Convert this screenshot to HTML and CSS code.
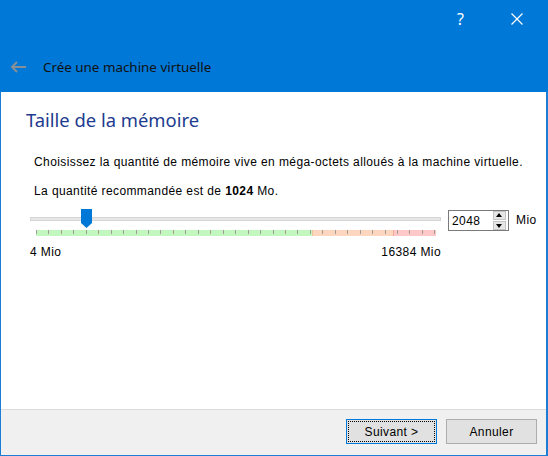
FILE: index.html
```html
<!DOCTYPE html>
<html lang="fr">
<head>
    <meta charset="UTF-8">
    <meta name="viewport" content="width=device-width, initial-scale=1.0">
    <title>Crée une machine virtuelle</title>
    <link rel="stylesheet" href="styles.css">
</head>
<body>
    <div class="window">
        <div class="titlebar">
            <div class="caption-buttons">
                <span class="help">?</span>
                <svg class="close" width="12" height="12" viewBox="0 0 12 12">
                    <path d="M0.5 0.5 L11.5 11.5 M11.5 0.5 L0.5 11.5" stroke="#fff" stroke-width="1.2" fill="none"/>
                </svg>
            </div>
            <div class="wizard-header">
                <svg class="back" width="17" height="12" viewBox="0 0 17 12">
                    <path d="M16 6 H2 M7 1 L2 6 L7 11" stroke="#8a8f96" stroke-width="2" fill="none"/>
                </svg>
                <span class="wizard-title">Crée une machine virtuelle</span>
            </div>
        </div>

        <div class="content">
            <h2 class="page-title">Taille de la mémoire</h2>
            <p class="text">Choisissez la quantité de mémoire vive en méga-octets alloués à la machine virtuelle.</p>
            <p class="text recommended">La quantité recommandée est de <b>1024</b> Mo.</p>

            <div class="memory-row">
                <div class="slider">
                    <div class="groove"></div>
                    <svg class="thumb" width="11" height="19" viewBox="0 0 11 19">
                        <path d="M0 0 H11 V14 L5.5 19 L0 14 Z" fill="#0078d7"/>
                    </svg>
                    <div class="scale">
                        <div class="zone ok"></div>
                        <div class="zone warn"></div>
                        <div class="zone bad"></div>
                    </div>
                    <div class="limits">
                        <span>4 Mio</span>
                        <span>16384 Mio</span>
                    </div>
                </div>
                <div class="spinbox">
                    <span class="value">2048</span>
                    <div class="spin">
                        <div class="spin-btn up"></div>
                        <div class="spin-btn down"></div>
                    </div>
                </div>
                <span class="unit">Mio</span>
            </div>
        </div>

        <div class="footer">
            <button class="btn default"><span>Suivant &gt;</span></button>
            <button class="btn">Annuler</button>
        </div>
    </div>
</body>
</html>
```

FILE: styles.css
```css
body {
    margin: 0;
    font-family: "Liberation Sans", Arial, sans-serif;
    font-size: 12px;
    letter-spacing: 0.4px;
    color: #000;
}

.window {
    width: 548px;
    height: 456px;
    box-sizing: border-box;
    border: 1px solid #1a7fd4;
    border-top: none;
    border-right-width: 2px;
    display: flex;
    flex-direction: column;
    background: #fff;
}

.titlebar {
    height: 92px;
    background: #0078d7;
    margin: 0 -2px 0 -1px;
    padding: 0 2px 0 1px;
}

.caption-buttons {
    height: 38px;
    display: flex;
    align-items: center;
    justify-content: flex-end;
    gap: 47px;
    padding-right: 23px;
}

.help {
    color: #fff;
    font-family: "Noto Sans", sans-serif;
    font-size: 16px;
    letter-spacing: 0;
    margin-top: -1px;
}

.wizard-header {
    display: flex;
    align-items: center;
    height: 54px;
    box-sizing: border-box;
    padding: 4px 0 0 9px;
}

.back {
    margin-right: 16px;
}

.wizard-title {
    font-family: "Noto Sans", sans-serif;
    font-size: 13.4px;
    letter-spacing: 0;
    color: #111;
}

.content {
    flex: 1;
    padding: 0 0 0 25px;
}

.page-title {
    margin: 15px 0 22px;
    font-family: "Noto Sans", sans-serif;
    font-weight: normal;
    font-size: 18.4px;
    letter-spacing: 0;
    line-height: 26px;
    color: #1d3b8f;
}

.text {
    margin: 0 0 14px 8px;
    line-height: 15px;
}

.text.recommended {
    margin-bottom: 11px;
}

.memory-row {
    display: flex;
    align-items: flex-start;
    margin-left: 4px;
}

.slider {
    position: relative;
    width: 411px;
    padding-top: 7px;
}

.groove {
    height: 2px;
    background: #e7e7e7;
    border: 1px solid #d6d6d6;
}

.thumb {
    position: absolute;
    left: 51px;
    top: -1px;
}

.scale {
    display: flex;
    margin: 9px 5px 0 6px;
    height: 6px;
    position: relative;
}

/* graduation marks drawn over the coloured zones */
.scale::after {
    content: "";
    position: absolute;
    inset: 0;
    background: repeating-linear-gradient(to right, #a09a90 0 1px, transparent 1px 12.45px);
    background-size: 100% 4px;
    background-repeat: no-repeat;
}

.zone {
    height: 6px;
}

.ok {
    width: 276px;
    background: #c3f7c0;
}

.warn {
    width: 80px;
    background: #fdd6c0;
    border-left: 1px solid #e8c79a;
}

.bad {
    flex: 1;
    background: #ffc8c8;
    border-left: 1px solid #f1aa9c;
}

.limits {
    display: flex;
    justify-content: space-between;
    margin-top: 9px;
    line-height: 14px;
}

.spinbox {
    margin-left: 7px;
    width: 61px;
    height: 21px;
    box-sizing: border-box;
    border: 1px solid #7a7a7a;
    display: flex;
    align-items: center;
    justify-content: space-between;
    padding: 0 2px 0 3px;
}

.spin {
    display: flex;
    flex-direction: column;
    gap: 1px;
}

.spin-btn {
    width: 11px;
    height: 7px;
    background: #e6e6e6;
    border: 1px solid #c4c4c4;
    position: relative;
}

.spin-btn::after {
    content: "";
    position: absolute;
    left: 2px;
    border-left: 3.5px solid transparent;
    border-right: 3.5px solid transparent;
}

.up::after {
    top: 1px;
    border-bottom: 4px solid #000;
}

.down::after {
    top: 2px;
    border-top: 4px solid #000;
}

.unit {
    margin: 3px 0 0 7px;
}

.footer {
    height: 46px;
    box-sizing: border-box;
    border-top: 1px solid #dcdcdc;
    background: #f0f0f0;
    display: flex;
    justify-content: flex-end;
    align-items: flex-start;
    gap: 9px;
    padding: 9px 9px 0 0;
}

.btn {
    width: 91px;
    height: 25px;
    background: #e1e1e1;
    border: 1px solid #adadad;
    font-family: "Liberation Sans", Arial, sans-serif;
    font-size: 12px;
    letter-spacing: 0.4px;
    color: #000;
    padding: 0;
}

.btn.default {
    border-color: #0078d7;
    padding: 1px;
}

.btn.default span {
    display: flex;
    align-items: center;
    justify-content: center;
    height: 100%;
    box-sizing: border-box;
    border: 1px dotted #000;
}
```
